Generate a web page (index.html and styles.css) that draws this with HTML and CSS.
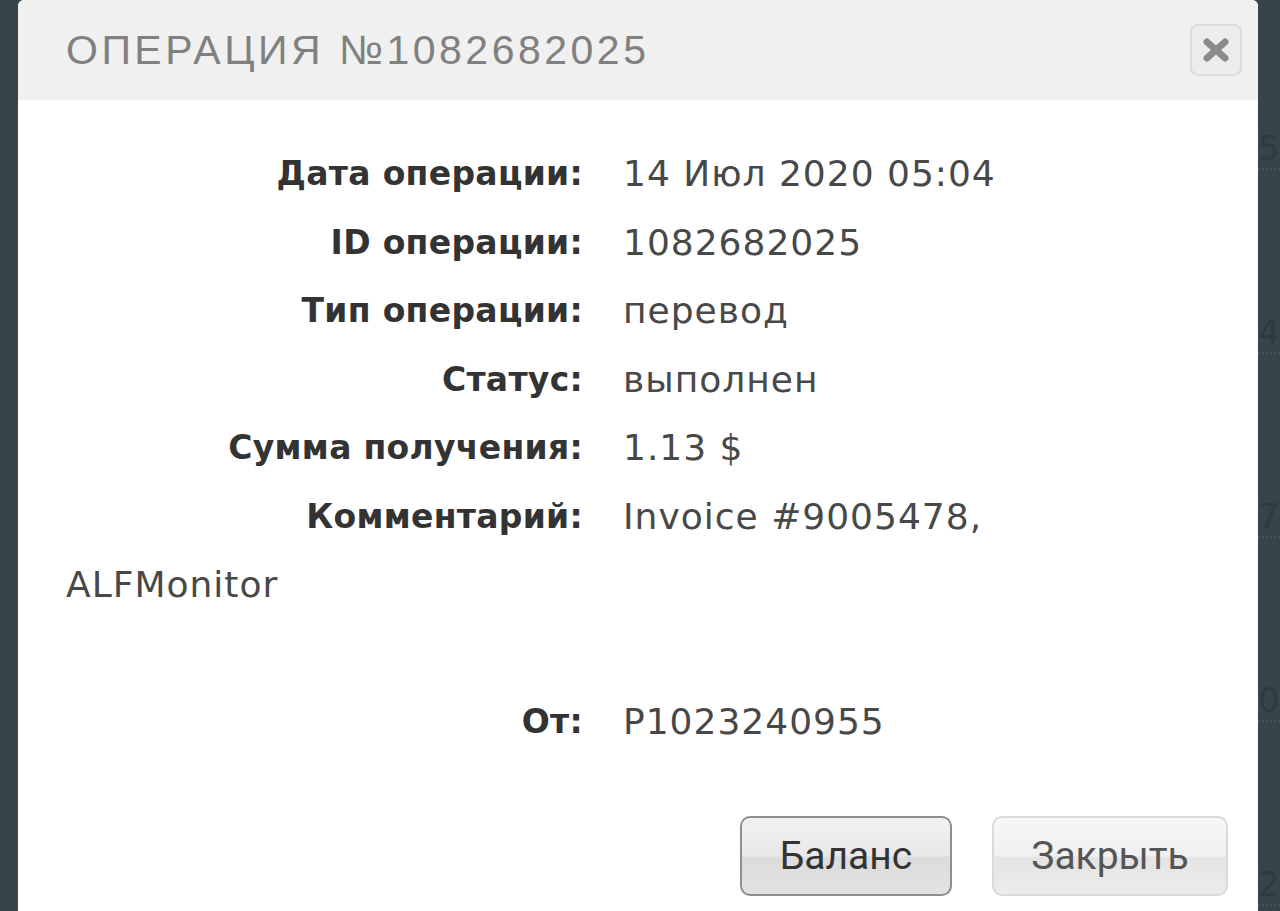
FILE: index.html
```html
<!DOCTYPE html>
<html lang="ru">
<head>
  <meta charset="UTF-8">
  <title>Операция №1082682025</title>
  <meta name="viewport" content="width=device-width, initial-scale=1.0"/>
  <link rel="stylesheet" href="styles.css">
</head>
<body>
  <div class="backdrop">
    <div class="modal">
      <div class="modal-header">
        <h2>Операция №1082682025</h2>
        <button class="close-btn" title="Закрыть">
          <svg width="28" height="24" viewBox="0 0 28 24"><path d="M5 4 L23 20 M23 4 L5 20" stroke="#8a8a8a" stroke-width="7" stroke-linecap="round"/></svg>
        </button>
      </div>

      <div class="modal-body">
        <div class="row"><span class="label">Дата операции:</span><span class="value">14 Июл 2020 05:04</span></div>
        <div class="row"><span class="label">ID операции:</span><span class="value">1082682025</span></div>
        <div class="row"><span class="label">Тип операции:</span><span class="value">перевод</span></div>
        <div class="row"><span class="label">Статус:</span><span class="value">выполнен</span></div>
        <div class="row"><span class="label">Сумма получения:</span><span class="value">1.13 $</span></div>
        <div class="row"><span class="label">Комментарий:</span><span class="value">Invoice #9005478,<br>ALFMonitor<br>&nbsp;</span></div>
        <div class="row"><span class="label">От:</span><span class="value">P1023240955</span></div>
      </div>

      <div class="modal-footer">
        <button class="btn btn-active">Баланс</button>
        <button class="btn">Закрыть</button>
      </div>
    </div>

    <div class="behind">
      <span>5</span>
      <span>4</span>
      <span>7</span>
      <span>0</span>
      <span>2</span>
    </div>
  </div>
</body>
</html>
```

FILE: styles.css
```css
body { margin: 0; background: #37444c; font-family: "DejaVu Sans", sans-serif; overflow: hidden; }
.backdrop { display: flex; height: 911px; padding-left: 18px; }
.modal { width: 1240px; background: #fff; border-top-left-radius: 6px; border-top-right-radius: 6px; flex: none; }
.behind { display: flex; flex-direction: column; padding-top: 128px; gap: 142px; color: #2e3a41; font-size: 34px; }
.behind span { border-bottom: 2px dotted #46545c; }

.modal-header { display: flex; align-items: center; justify-content: space-between; height: 100px; background: #f0f0f0; padding: 0 16px 0 48px; border-top-left-radius: 6px; border-top-right-radius: 6px; }
.modal-header h2 { margin: 0; font-family: "Liberation Sans", sans-serif; font-weight: normal; font-size: 41px; letter-spacing: 3.5px; text-transform: uppercase; color: #808080; }
.close-btn { display: flex; align-items: center; justify-content: center; width: 52px; height: 52px; border: 2px solid #dcdcdc; border-radius: 8px; background: #ececec; padding: 0; }

.modal-body { padding: 40px 0 0 48px; font-size: 36px; line-height: 68.5px; color: #484848; }
.row .label { display: inline-block; vertical-align: top; width: 517px; text-align: right; font-size: 33px; font-weight: bold; letter-spacing: 0.3px; color: #333; }
.row .value { margin-left: 40px; letter-spacing: 1px; }

.modal-footer { display: flex; justify-content: flex-end; gap: 40px; padding: 59px 30px 0 0; }
.btn { width: 236px; height: 80px; border: 2px solid #dadada; border-radius: 10px; background: linear-gradient(#f7f7f7, #f0f0f0 50%, #e4e4e4 52%, #ececec); font-family: Roboto, sans-serif; font-size: 39px; color: #555; }
.btn-active { width: 212px; border-color: #8f8f8f; color: #333; background: linear-gradient(#f2f2f2, #e8e8e8 50%, #dcdcdc 52%, #e2e2e2); }
```
